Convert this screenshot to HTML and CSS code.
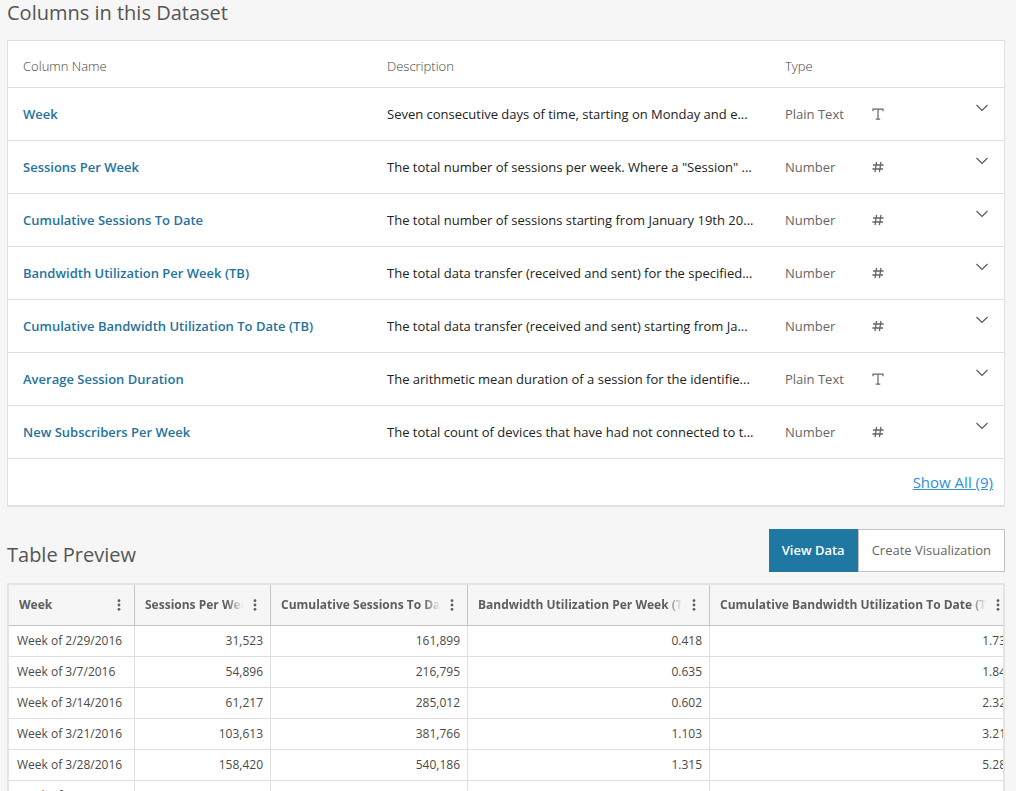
FILE: index.html
```html
<!DOCTYPE html>
<html lang="en">
<head>
<meta charset="utf-8">
<title>Dataset</title>
<link rel="stylesheet" href="styles.css">
</head>
<body>
<svg class="sprite" aria-hidden="true">
  <symbol id="text" viewBox="0 0 12 12"><path d="M1 3.2V1.200h10v2M6 1.200v10M3.800 11.200h4.400" fill="none" stroke="currentColor" stroke-width="1.2"/></symbol>
  <symbol id="number" viewBox="0 0 12 12"><path d="M4.6.8 3 11.2M9 .8 7.4 11.2M1 4h10.6M.4 8H11" fill="none" stroke="currentColor" stroke-width="1.3"/></symbol>
  <symbol id="chevron" viewBox="0 0 12 8"><path d="m.5 1 5.5 5.5L11.500 1" fill="none" stroke="currentColor" stroke-width="1.1"/></symbol>
  <symbol id="dots" viewBox="0 0 4 12"><circle cx="2" cy="1.700" r="1.400" fill="currentColor"/><circle cx="2" cy="6" r="1.400" fill="currentColor"/><circle cx="2" cy="10.300" r="1.400" fill="currentColor"/></symbol>
</svg>
<main class="page">
  <section class="columns">
    <h2 class="title">Columns in this Dataset</h2>
    <div class="card">
      <table class="schema">
        <colgroup><col class="c-name"><col class="c-desc"><col class="c-type"><col class="c-icon"><col></colgroup>
        <thead><tr><th>Column Name</th><th>Description</th><th colspan="3">Type</th></tr></thead>
        <tbody>
          <tr><td class="name">Week</td><td class="desc">Seven consecutive days of time, starting on Monday and e...</td><td class="type">Plain Text</td><td class="kind"><svg><use href="#text"/></svg></td><td class="more"><button class="toggle" aria-label="Expand Week"><svg><use href="#chevron"/></svg></button></td></tr>
          <tr><td class="name">Sessions Per Week</td><td class="desc">The total number of sessions per week. Where a "Session" ...</td><td class="type">Number</td><td class="kind"><svg><use href="#number"/></svg></td><td class="more"><button class="toggle" aria-label="Expand Sessions Per Week"><svg><use href="#chevron"/></svg></button></td></tr>
          <tr><td class="name">Cumulative Sessions To Date</td><td class="desc">The total number of sessions starting from January 19th 20...</td><td class="type">Number</td><td class="kind"><svg><use href="#number"/></svg></td><td class="more"><button class="toggle" aria-label="Expand Cumulative Sessions To Date"><svg><use href="#chevron"/></svg></button></td></tr>
          <tr><td class="name">Bandwidth Utilization Per Week (TB)</td><td class="desc">The total data transfer (received and sent) for the specified...</td><td class="type">Number</td><td class="kind"><svg><use href="#number"/></svg></td><td class="more"><button class="toggle" aria-label="Expand Bandwidth Utilization Per Week"><svg><use href="#chevron"/></svg></button></td></tr>
          <tr><td class="name">Cumulative Bandwidth Utilization To Date (TB)</td><td class="desc">The total data transfer (received and sent) starting from Ja...</td><td class="type">Number</td><td class="kind"><svg><use href="#number"/></svg></td><td class="more"><button class="toggle" aria-label="Expand Cumulative Bandwidth Utilization To Date"><svg><use href="#chevron"/></svg></button></td></tr>
          <tr><td class="name">Average Session Duration</td><td class="desc">The arithmetic mean duration of a session for the identifie...</td><td class="type">Plain Text</td><td class="kind"><svg><use href="#text"/></svg></td><td class="more"><button class="toggle" aria-label="Expand Average Session Duration"><svg><use href="#chevron"/></svg></button></td></tr>
          <tr><td class="name">New Subscribers Per Week</td><td class="desc">The total count of devices that have had not connected to t...</td><td class="type">Number</td><td class="kind"><svg><use href="#number"/></svg></td><td class="more"><button class="toggle" aria-label="Expand New Subscribers Per Week"><svg><use href="#chevron"/></svg></button></td></tr>
        </tbody>
      </table>
      <div class="card-foot"><a class="show-all" href="#all">Show All (9)</a></div>
    </div>
  </section>
  <section class="preview">
    <div class="preview-head">
      <h2 class="title">Table Preview</h2>
      <div class="actions"><button class="btn btn-primary">View Data</button><button class="btn">Create Visualization</button></div>
    </div>
    <div class="grid-wrap">
      <table class="grid">
        <colgroup><col class="g-week"><col class="g-sessions"><col class="g-total"><col class="g-band"><col class="g-cumulative"></colgroup>
        <thead><tr>
          <th><div class="head"><span class="label">Week</span><button class="menu" aria-label="Week options"><svg><use href="#dots"/></svg></button></div></th>
          <th><div class="head"><span class="label fade">Sessions Per Week</span><button class="menu" aria-label="Sessions Per Week options"><svg><use href="#dots"/></svg></button></div></th>
          <th><div class="head"><span class="label fade">Cumulative Sessions To Date</span><button class="menu" aria-label="Cumulative Sessions options"><svg><use href="#dots"/></svg></button></div></th>
          <th><div class="head"><span class="label fade">Bandwidth Utilization Per Week (TB)</span><button class="menu" aria-label="Bandwidth options"><svg><use href="#dots"/></svg></button></div></th>
          <th><div class="head"><span class="label fade">Cumulative Bandwidth Utilization To Date (TB)</span><button class="menu" aria-label="Cumulative Bandwidth options"><svg><use href="#dots"/></svg></button></div></th>
        </tr></thead>
        <tbody>
          <tr><td>Week of 2/29/2016</td><td>31,523</td><td>161,899</td><td>0.418</td><td>1.73</td></tr>
          <tr><td>Week of 3/7/2016</td><td>54,896</td><td>216,795</td><td>0.635</td><td>1.84</td></tr>
          <tr><td>Week of 3/14/2016</td><td>61,217</td><td>285,012</td><td>0.602</td><td>2.32</td></tr>
          <tr><td>Week of 3/21/2016</td><td>103,613</td><td>381,766</td><td>1.103</td><td>3.21</td></tr>
          <tr><td>Week of 3/28/2016</td><td>158,420</td><td>540,186</td><td>1.315</td><td>5.28</td></tr>
          <tr><td>Week of 4/4/2016</td><td>160,306</td><td>700,492</td><td>1.680</td><td>6.96</td></tr>
        </tbody>
      </table>
    </div>
  </section>
</main>
</body>
</html>
```
FILE: styles.css
```css
* { box-sizing: border-box; }
body {
  margin: 0;
  background: #f6f6f6;
  color: #555;
  font: 13px/20px "Open Sans", sans-serif;
}
button { font: inherit; color: inherit; cursor: pointer; }
.sprite { position: absolute; width: 0; height: 0; }
.page { padding: 0 11px 0 7px; }
.title {
  margin: 0;
  font-size: 20px;
  line-height: 26px;
  font-weight: 400;
}

.card {
  margin-top: 14px;
  background: #fff;
  border: 1px solid #e0e0e0;
  border-bottom-width: 2px;
}
.schema, .grid { border-collapse: separate; border-spacing: 0; table-layout: fixed; }
.schema { width: 100%; }
.schema th, .schema td {
  padding: 0 0 0 15px;
  border-bottom: 1px solid #e0e0e0;
  text-align: left;
  white-space: nowrap;
}
.schema th { height: 47px; padding-top: 4px; color: #444; font-weight: 300; }
.schema td { height: 53px; }
.c-name { width: 364px; }
.c-desc { width: 398px; }
.c-type { width: 87px; }
.c-icon { width: 40px; }
.schema .name { color: #1f73a0; font-weight: 600; }
.schema .desc { color: #222; overflow: hidden; }
.schema .type { color: #666; }
.kind { color: #666; }
.kind svg { display: block; width: 12px; height: 12px; }
.schema .more { text-align: right; vertical-align: top; padding: 12px 11px 0 0; }
.toggle { display: flex; margin-left: auto; padding: 4px 5px; border: 0; background: none; }
.toggle svg { width: 12px; height: 8px; }
.card-foot { padding: 12px 11px 12px 0; text-align: right; line-height: 22px; }
.show-all { display: inline-block; vertical-align: top; color: #2e8fdb; font-size: 15px; }

.preview-head {
  display: flex;
  justify-content: space-between;
  align-items: flex-end;
  margin-top: 22px;
}
.preview-head .title { margin-bottom: 4px; }
.actions { display: flex; }
.btn {
  height: 43px;
  padding: 0 13px 2px;
  border: 1px solid #c4c4c4;
  background: #fff;
  color: #666;
}
.btn-primary { padding: 0 12px 2px; border-color: #1e78a2; background: #1e78a2; color: #fff; font-weight: 600; }

.grid-wrap {
  margin-top: 11px;
  border: 2px solid #e4e4e4;
  border-bottom: 0;
  overflow: hidden;
  background: #fff;
}
.grid { width: 1005px; font-size: 12px; }
.g-week { width: 126px; }
.g-sessions { width: 136px; }
.g-total { width: 197px; }
.g-band { width: 242px; }
.g-cumulative { width: 304px; }
.grid th {
  height: 41px;
  padding: 0 9px 0 10px;
  background: #f6f6f6;
  border-right: 1px solid #c4c4c4;
  border-bottom: 1px solid #c4c4c4;
  color: #5e5e5e;
  text-align: left;
}
.head { display: flex; align-items: center; gap: 6px; }
.label { flex: 1; min-width: 0; overflow: hidden; white-space: nowrap; }
.fade { mask-image: linear-gradient(to left, transparent, #000 16px); }
.menu { display: flex; padding: 4px; border: 0; background: none; }
.menu svg { width: 4px; height: 12px; }
.grid td {
  height: 31px;
  padding: 0 7px 1px;
  border-right: 1px solid #e0e0e0;
  border-bottom: 1px solid #e0e0e0;
  color: #4a4a4a;
  text-align: right;
}
.grid td:first-child { padding-left: 8px; text-align: left; }
```
